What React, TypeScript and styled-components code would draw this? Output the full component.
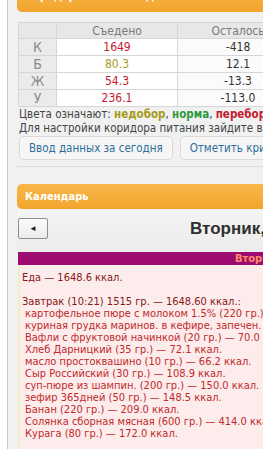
import React from 'react';
import styled, { createGlobalStyle } from 'styled-components';

const GlobalStyle = createGlobalStyle`
	html, body {
		margin: 0;
		padding: 0;
		width: 263px;
		height: 449px;
		overflow: hidden;
		background: #ffffff;
	}
	body {
		font-family: "DejaVu Sans Condensed", "DejaVu Sans", Tahoma, sans-serif;
		font-stretch: condensed;
	}
`;

const macros = [
	{ label: 'К', eaten: '1649', tone: 'over', left: '-418' },
	{ label: 'Б', eaten: '80.3', tone: 'under', left: '12.1' },
	{ label: 'Ж', eaten: '54.3', tone: 'over', left: '-13.3' },
	{ label: 'У', eaten: '236.1', tone: 'over', left: '-113.0' },
];

const foods = [
	'картофельное пюре с молоком 1.5% (220 гр.) — 180.4 ккал.',
	'куриная грудка маринов. в кефире, запечен. (150 гр.) — 157.5 ккал.',
	'Вафли с фруктовой начинкой (20 гр.) — 70.0 ккал.',
	'Хлеб Дарницкий (35 гр.) — 72.1 ккал.',
	'масло простоквашино (10 гр.) — 66.2 ккал.',
	'Сыр Российский (30 гр.) — 108.9 ккал.',
	'суп-пюре из шампин. (200 гр.) — 150.0 ккал.',
	'зефир 365дней (50 гр.) — 148.5 ккал.',
	'Банан (220 гр.) — 209.0 ккал.',
	'Солянка сборная мясная (600 гр.) — 414.0 ккал.',
	'Курага (80 гр.) — 172.0 ккал.',
];

const toneColor: Record<string, string> = {
	under: '#a59b1c',
	norm: '#2c9a3c',
	over: '#c4192e',
};

const App = (): JSX.Element => {
	return (
		<>
			<GlobalStyle />
			<Page>
				<Column>
					<Widget>
						<WidgetHeader>Коридор питания на день</WidgetHeader>
						<WidgetBody>
							<MacroTable>
								<thead>
									<tr>
										<HeadCell $w={37}></HeadCell>
										<HeadCell $w={120}>Съедено</HeadCell>
										<HeadCell $w={120}>Осталось</HeadCell>
									</tr>
								</thead>
								<tbody>
									{macros.map((m) => (
										<tr key={m.label}>
											<LabelCell>{m.label}</LabelCell>
											<ValueCell $color={toneColor[m.tone]}>{m.eaten}</ValueCell>
											<RestCell>{m.left}</RestCell>
										</tr>
									))}
								</tbody>
							</MacroTable>
							<Legend>
								Цвета означают: <Mark $color={toneColor.under}>недобор</Mark>,{' '}
								<Mark $color={toneColor.norm}>норма</Mark>, <Mark $color={toneColor.over}>перебор</Mark>
							</Legend>
							<Legend>Для настройки коридора питания зайдите в профиль</Legend>
							<ButtonRow>
								<ActionButton>Ввод данных за сегодня</ActionButton>
								<ActionButton>Отметить критерии</ActionButton>
							</ButtonRow>
						</WidgetBody>
					</Widget>

					<Widget>
						<CalendarHeader>Календарь</CalendarHeader>
						<Toolbar>
							<NavButton>◄</NavButton>
							<DayTitle>Вторник, 12 марта</DayTitle>
						</Toolbar>
						<DayBar>Вторник</DayBar>
						<DayContent>
							<Summary>Еда — 1648.6 ккал.</Summary>
							<Summary>&nbsp;</Summary>
							<Summary>Завтрак (10:21) 1515 гр. — 1648.60 ккал.:</Summary>
							{foods.map((f) => (
								<Food key={f}>{f}</Food>
							))}
						</DayContent>
					</Widget>
				</Column>
			</Page>
		</>
	);
};

const Page = styled.div`
	margin-top: -14px;
	padding-left: 7px;
	width: 420px;
`;

const Column = styled.div`
	border-left: 1px solid #c9c9c9;
	background: #f1f1f1;
	padding-left: 9px;
	min-height: 480px;
`;

const Widget = styled.section`
	display: flex;
	flex-direction: column;
`;

const WidgetHeader = styled.div`
	height: 26px;
	line-height: 22px;
	padding-left: 8px;
	border-radius: 5px;
	background: linear-gradient(#f8b84a, #f2a42c);
	color: #ffffff;
	font-weight: bold;
	font-size: 11px;
`;

const WidgetBody = styled.div`
	padding: 10px 0 6px 1px;
	border-bottom: 1px solid #dcdcdc;
	margin-bottom: 17px;
`;

const MacroTable = styled.table`
	border-collapse: collapse;
	table-layout: fixed;
	width: 277px;
`;

const HeadCell = styled.th<{ $w: number }>`
	width: ${(p) => p.$w}px;
	height: 15px;
	padding: 0;
	background: #e7e7e7;
	border: 1px solid #d6d6d6;
	color: #7a7a7a;
	font-weight: normal;
	font-size: 12px;
	text-align: center;
`;

const LabelCell = styled.td`
	height: 16px;
	padding: 0;
	background: #ebebeb;
	border: 1px solid #d6d6d6;
	color: #8a8a8a;
	font-size: 14px;
	text-align: center;
`;

const ValueCell = styled.td<{ $color: string }>`
	padding: 0;
	background: #ffffff;
	border: 1px solid #d6d6d6;
	color: ${(p) => p.$color};
	font-size: 12px;
	text-align: center;
`;

const RestCell = styled.td`
	padding: 0;
	background: #fbfbfb;
	border: 1px solid #d6d6d6;
	color: #333333;
	font-size: 12px;
	text-align: center;
`;

const Legend = styled.div`
	padding-left: 1px;
	line-height: 14px;
	font-size: 11.5px;
	color: #444444;
	white-space: nowrap;
`;

const Mark = styled.b<{ $color: string }>`
	color: ${(p) => p.$color};
`;

const ButtonRow = styled.div`
	display: flex;
	gap: 7px;
	margin-top: 1px;
	padding-left: 1px;
`;

const ActionButton = styled.button`
	flex: none;
	height: 24px;
	padding: 0 9px;
	border: 1px solid #dadada;
	border-radius: 4px;
	background: #f6f6f6;
	color: #2f6d9b;
	font-family: inherit;
	font-stretch: condensed;
	font-size: 11.5px;
	white-space: nowrap;
`;

const CalendarHeader = styled(WidgetHeader)`
	height: 25px;
	line-height: 25px;
`;

const Toolbar = styled.div`
	display: flex;
	align-items: center;
	height: 43px;
	padding: 0 0 4px 1px;
	box-sizing: border-box;
	background: linear-gradient(#f4f4f4, #ececec);
`;

const NavButton = styled.button`
	flex: none;
	width: 30px;
	height: 21px;
	padding: 0;
	border: 1px solid #8e8e8e;
	border-radius: 2px;
	background: linear-gradient(#fbfbfb, #ececec);
	color: #222222;
	font-size: 8px;
	line-height: 19px;
`;

const DayTitle = styled.h2`
	margin: 0 0 0 142px;
	font-family: "Liberation Sans", Arial, sans-serif;
	font-stretch: normal;
	font-size: 17px;
	font-weight: bold;
	color: #2f2f2f;
	white-space: nowrap;
`;

const DayBar = styled.div`
	margin-left: 1px;
	height: 13px;
	line-height: 13px;
	padding-left: 217px;
	background: #9d0b70;
	color: #f98c67;
	font-size: 11px;
	font-weight: bold;
	white-space: nowrap;
`;

const DayContent = styled.div`
	margin-left: 1px;
	min-height: 200px;
	padding: 7px 0 0 2px;
	border-left: 2px solid #f3edc6;
	background: #fdecec;
`;

const Summary = styled.div`
	line-height: 12px;
	font-size: 11px;
	color: #861818;
	white-space: nowrap;
`;

const Food = styled(Summary)`
	padding-left: 3px;
	color: #bf2a2a;
`;

export default App;
